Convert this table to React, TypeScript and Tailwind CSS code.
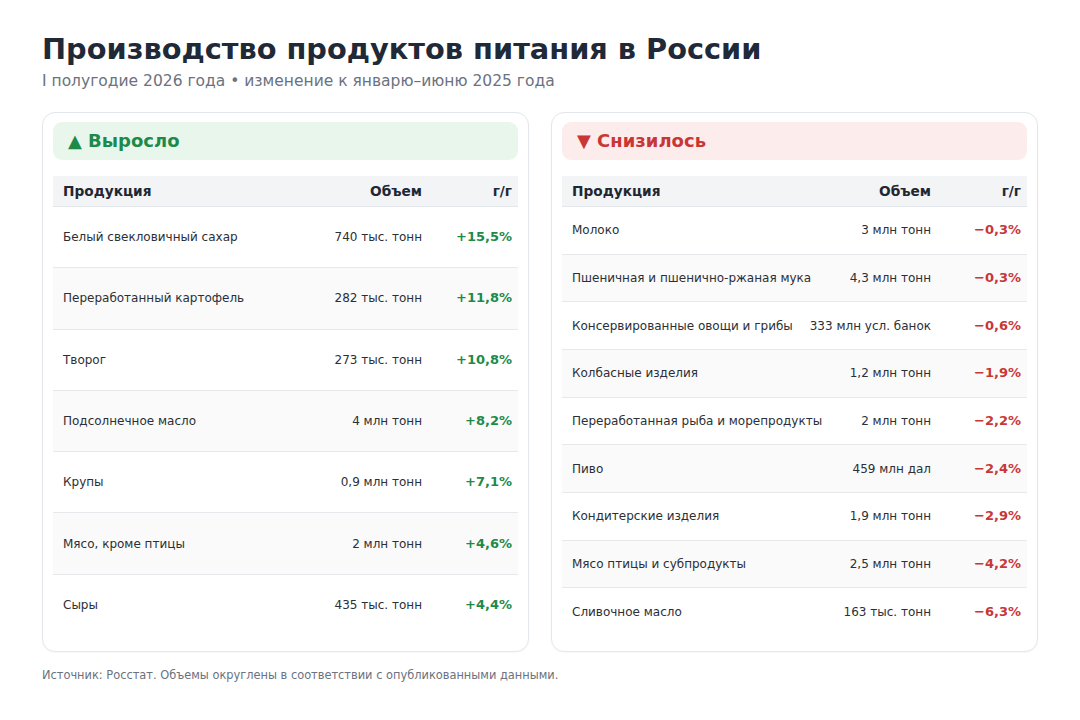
import React from "react";

type Row = { name: string; vol: string; pct: string };

const up: Row[] = [
  { name: "Белый свекловичный сахар", vol: "740 тыс. тонн", pct: "+15,5%" },
  { name: "Переработанный картофель", vol: "282 тыс. тонн", pct: "+11,8%" },
  { name: "Творог", vol: "273 тыс. тонн", pct: "+10,8%" },
  { name: "Подсолнечное масло", vol: "4 млн тонн", pct: "+8,2%" },
  { name: "Крупы", vol: "0,9 млн тонн", pct: "+7,1%" },
  { name: "Мясо, кроме птицы", vol: "2 млн тонн", pct: "+4,6%" },
  { name: "Сыры", vol: "435 тыс. тонн", pct: "+4,4%" },
];

const down: Row[] = [
  { name: "Молоко", vol: "3 млн тонн", pct: "−0,3%" },
  { name: "Пшеничная и пшенично-ржаная мука", vol: "4,3 млн тонн", pct: "−0,3%" },
  { name: "Консервированные овощи и грибы", vol: "333 млн усл. банок", pct: "−0,6%" },
  { name: "Колбасные изделия", vol: "1,2 млн тонн", pct: "−1,9%" },
  { name: "Переработанная рыба и морепродукты", vol: "2 млн тонн", pct: "−2,2%" },
  { name: "Пиво", vol: "459 млн дал", pct: "−2,4%" },
  { name: "Кондитерские изделия", vol: "1,9 млн тонн", pct: "−2,9%" },
  { name: "Мясо птицы и субпродукты", vol: "2,5 млн тонн", pct: "−4,2%" },
  { name: "Сливочное масло", vol: "163 тыс. тонн", pct: "−6,3%" },
];

function Card({ rows, positive }: { rows: Row[]; positive: boolean }) {
  return (
    <div className="flex flex-col rounded-[13px] border border-[#e3e6ea] bg-white px-[10px] pt-[9px] pb-[16px] shadow-[0_1px_2px_rgba(0,0,0,0.03)]">
      {positive ? (
        <div className="flex h-[38px] items-center rounded-[9px] bg-[#e9f6ec] px-[15px] pb-[1px] text-[18px] font-bold text-[#1e8a4a]">
          ▲ Выросло
        </div>
      ) : (
        <div className="flex h-[38px] items-center rounded-[9px] bg-[#fdecec] px-[15px] pb-[1px] text-[18px] font-bold text-[#c93636]">
          ▼ Снизилось
        </div>
      )}
      <div className="mt-[16px] flex h-[31px] items-center border-b border-[#e3e6ea] bg-[#f2f4f6] text-[13.7px] font-bold text-[#1f2733]">
        <div className="flex-1 pl-[10px]">Продукция</div>
        <div className="shrink-0 pr-[10px] text-right">Объем</div>
        <div className="w-[86px] shrink-0 pr-[6px] text-right">г/г</div>
      </div>
      <div className="flex h-[428px] flex-col">
        {rows.map((r, i) => (
          <div
            key={r.name}
            className={
              "flex flex-1 items-center text-[12px] leading-[18px] " +
              (i % 2 === 1 ? "bg-[#fafafa] " : "bg-white ") +
              (i < rows.length - 1 ? "border-b border-[#e6e8eb]" : "")
            }
          >
            <div className="flex-1 whitespace-nowrap pl-[10px] text-[#2b2f36]">{r.name}</div>
            <div className="shrink-0 whitespace-nowrap pr-[10px] text-right text-[#2b2f36]">{r.vol}</div>
            <div
              className={
                "w-[86px] shrink-0 pr-[6px] text-right text-[13px] font-bold " +
                (positive ? "text-[#1e8a4a]" : "text-[#c93636]")
              }
            >
              {r.pct}
            </div>
          </div>
        ))}
      </div>
    </div>
  );
}

export default function App() {
  return (
    <div
      className="min-h-[720px] w-[1080px] bg-white px-[42px] pt-[32px]"
      style={{ fontFamily: "'DejaVu Sans', Verdana, sans-serif" }}
    >
      <h1 className="text-[28.8px] font-bold leading-[34px] text-[#1f2937]">
        Производство продуктов питания в России
      </h1>
      <div className="mt-[5px] text-[15.5px] leading-[20px] text-[#6b7280]">
        I полугодие 2026 года • изменение к январю–июню 2025 года
      </div>
      <div className="mt-[21px] grid grid-cols-2 gap-[22px]">
        <Card rows={up} positive />
        <Card rows={down} positive={false} />
      </div>
      <div className="mt-[15px] text-[11.4px] leading-[16px] text-[#6b7280]">
        Источник: Росстат. Объемы округлены в соответствии с опубликованными данными.
      </div>
    </div>
  );
}
